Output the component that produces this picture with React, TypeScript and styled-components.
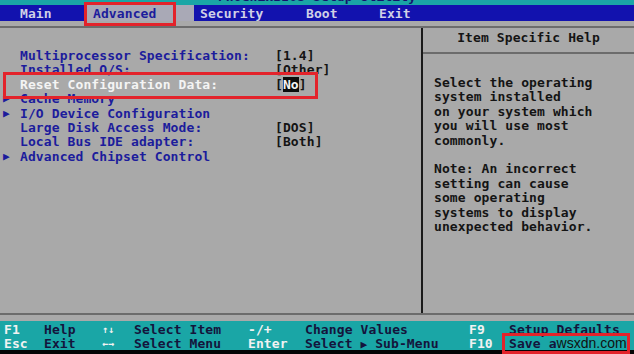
import React from 'react';
import styled, { createGlobalStyle } from 'styled-components';

const GlobalStyle = createGlobalStyle`
  html, body {
    margin: 0;
    padding: 0;
    background: #000;
  }
`;

const MONO = `'DejaVu Sans Mono', 'Liberation Mono', monospace`;

const Screen = styled.div`
  position: relative;
  width: 634px;
  height: 354px;
  overflow: hidden;
  display: flex;
  flex-direction: column;
  background: #a9a9a9;
  font-family: ${MONO};
  font-weight: bold;
  font-size: 13px;
  letter-spacing: 0.1px;
  white-space: pre;
`;

const TitleBar = styled.div`
  height: 5px;
  background: #1aa6a6;
  overflow: hidden;
`;

const TitleText = styled.div`
  margin-top: -10px;
  line-height: 14px;
  text-align: center;
  color: #14146e;
`;

const MenuBar = styled.div`
  height: 16px;
  display: flex;
  align-items: center;
  padding-left: 14px;
  background: #1212ae;
`;

const MenuTab = styled.div<{ $w: number; $active?: boolean }>`
  width: ${({ $w }) => $w}px;
  height: 100%;
  display: flex;
  align-items: center;
  padding-left: 6px;
  box-sizing: border-box;
  color: ${({ $active }) => ($active ? '#1c1c9c' : '#d0d0e6')};
  background: ${({ $active }) => ($active ? '#a9a9b6' : 'transparent')};
`;

const Body = styled.div`
  margin-top: 5px;
  height: 285px;
  display: flex;
  border-top: 2px solid #6c6c6c;
  border-bottom: 2px solid #6c6c6c;
`;

const LeftPanel = styled.div`
  width: 423px;
  border-right: 2px solid #1a1a1a;
  padding: 21px 0 0 3px;
  box-sizing: border-box;
  display: grid;
  grid-template-columns: 17px 255px 1fr;
  grid-auto-rows: 14.4px;
  align-content: start;
  line-height: 14.4px;
`;

const Marker = styled.span<{ $dark?: boolean }>`
  color: ${({ $dark }) => ($dark ? '#14143c' : '#1c1c9c')};
  font-size: 11px;
`;

const Label = styled.span<{ $selected?: boolean }>`
  color: ${({ $selected }) => ($selected ? '#f4f4f4' : '#1c1c9c')};
`;

const Value = styled.span`
  color: #141414;
`;

const Cursor = styled.span`
  background: #0c0c0c;
  color: #f4f4f4;
`;

const RightPanel = styled.div`
  flex: 1;
  display: flex;
  flex-direction: column;
`;

const HelpHeader = styled.div`
  height: 26px;
  padding-top: 3px;
  box-sizing: border-box;
  line-height: 14.4px;
  text-align: center;
  color: #141414;
  border-bottom: 2px solid #6c6c6c;
`;

const HelpText = styled.div`
  padding: 22px 0 0 11px;
  line-height: 14.4px;
  color: #141414;
`;

const FooterGap = styled.div`
  height: 6px;
`;

const KeyBar = styled.div`
  height: 29px;
  padding: 2px 0 0 4px;
  box-sizing: border-box;
  background: #1aa6a6;
  display: grid;
  grid-template-columns: 40px 58px 32px 114px 57px 164px 40px 1fr;
  grid-auto-rows: 13.5px;
  line-height: 13.5px;
`;

const Key = styled.span<{ $small?: boolean }>`
  color: #f2f2f2;
  font-size: ${({ $small }) => ($small ? '10px' : '13px')};
`;

const KeyDesc = styled.span`
  color: #14143c;
`;

const Watermark = styled.span`
  font-family: 'Liberation Sans', Arial, sans-serif;
  font-weight: normal;
  font-size: 14px;
  color: #111;
  letter-spacing: 0;
`;

const BottomEdge = styled.div`
  flex: 1;
  background: #050505;
`;

const Highlight = styled.div`
  position: absolute;
  border: 3px solid #e3232b;
  box-sizing: border-box;
  pointer-events: none;
`;

type Item = { marker?: boolean; label: string; value?: React.ReactNode; selected?: boolean };

const items: Item[] = [
  { label: 'Multiprocessor Specification:', value: '[1.4]' },
  { label: 'Installed O/S:', value: '[Other]' },
  {
    label: 'Reset Configuration Data:',
    value: (
      <>
        [<Cursor>No</Cursor>]
      </>
    ),
    selected: true,
  },
  { marker: true, label: 'Cache Memory' },
  { marker: true, label: 'I/O Device Configuration' },
  { label: 'Large Disk Access Mode:', value: '[DOS]' },
  { label: 'Local Bus IDE adapter:', value: '[Both]' },
  { marker: true, label: 'Advanced Chipset Control' },
];

const helpLines = [
  'Select the operating',
  'system installed',
  'on your system which',
  'you will use most',
  'commonly.',
  '',
  'Note: An incorrect',
  'setting can cause',
  'some operating',
  'systems to display',
  'unexpected behavior.',
];

export default function App() {
  return (
    <>
      <GlobalStyle />
      <Screen>
        <TitleBar>
          <TitleText>PhoenixBIOS Setup Utility</TitleText>
        </TitleBar>

        <MenuBar>
          <MenuTab $w={73}>Main</MenuTab>
          <MenuTab $w={107} $active>
            Advanced
          </MenuTab>
          <MenuTab $w={106}>Security</MenuTab>
          <MenuTab $w={73}>Boot</MenuTab>
          <MenuTab $w={60}>Exit</MenuTab>
        </MenuBar>

        <Body>
          <LeftPanel>
            {items.map((it) => (
              <React.Fragment key={it.label}>
                <Marker>{it.marker ? '▶' : ''}</Marker>
                <Label $selected={it.selected}>{it.label}</Label>
                <Value>{it.value ?? ''}</Value>
              </React.Fragment>
            ))}
          </LeftPanel>
          <RightPanel>
            <HelpHeader>Item Specific Help</HelpHeader>
            <HelpText>
              {helpLines.map((line, i) => (
                <div key={i}>{line || ' '}</div>
              ))}
            </HelpText>
          </RightPanel>
        </Body>

        <FooterGap />

        <KeyBar>
          <Key>F1</Key>
          <KeyDesc>Help</KeyDesc>
          <Key $small>↑↓</Key>
          <KeyDesc>Select Item</KeyDesc>
          <Key>-/+</Key>
          <KeyDesc>Change Values</KeyDesc>
          <Key>F9</Key>
          <KeyDesc>Setup Defaults</KeyDesc>

          <Key>Esc</Key>
          <KeyDesc>Exit</KeyDesc>
          <Key $small>←→</Key>
          <KeyDesc>Select Menu</KeyDesc>
          <Key>Enter</Key>
          <KeyDesc>
            Select <Marker $dark>▶</Marker> Sub-Menu
          </KeyDesc>
          <Key>F10</Key>
          <KeyDesc>
            Save a<Watermark>wsxdn.com</Watermark>
          </KeyDesc>
        </KeyBar>

        <BottomEdge />

        <Highlight style={{ left: 84, top: 2, width: 92, height: 24 }} />
        <Highlight style={{ left: 3, top: 72, width: 315, height: 27 }} />
        <Highlight style={{ left: 502, top: 333, width: 128, height: 21 }} />
      </Screen>
    </>
  );
}
